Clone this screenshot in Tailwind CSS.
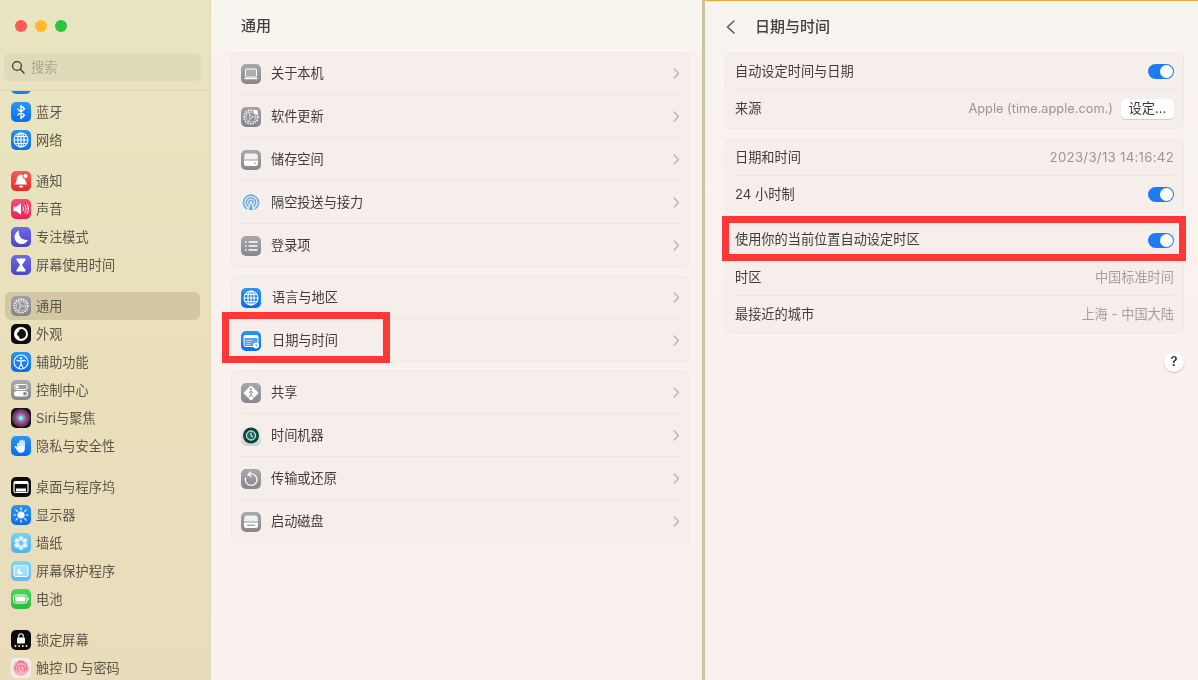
<!DOCTYPE html>
<html lang="zh-CN">
<head>
    <meta charset="UTF-8">
    <meta name="viewport" content="width=device-width, initial-scale=1.0">
    <title>日期与时间</title>
    <script src="https://cdn.jsdelivr.net/npm/@tailwindcss/browser@4"></script>
</head>
<body class="w-[1198px] h-[680px] overflow-hidden font-['Inter','Noto_Sans_CJK_SC',sans-serif] text-[13.2px] text-[#3f3d3a]">
    <svg class="hidden" width="0" height="0">
        <symbol id="globe" viewBox="0 0 20 20"><g fill="none" stroke="#fff" stroke-width="1.100"><circle cx="10" cy="10" r="7"/><ellipse cx="10" cy="10" rx="3.200" ry="7"/><path d="M10 3v14M3 10h14M4.200 6.500h11.600M4.200 13.500h11.600"/></g></symbol>
        <symbol id="gear" viewBox="0 0 20 20"><g fill="none" stroke="#fff"><circle cx="10" cy="10" r="6.800" stroke-width="1.800" stroke-dasharray="1.600 1" stroke-opacity=".9"/><circle cx="10" cy="10" r="4.800" stroke-width=".5"/><path d="M8.700 7.600L12 10l-3.300 2.400zM12 10h3M8.700 7.600L7 5M8.700 12.400L7 15" stroke-width=".6"/></g></symbol>
        <symbol id="chev" viewBox="0 0 7 11"><path d="M1.200 1l4.200 4.500-4.200 4.500" fill="none" stroke="#bdb7b4" stroke-width="1.500" stroke-linecap="round" stroke-linejoin="round"/></symbol>
    </svg>
    <div class="relative w-full h-full blur-[0.35px]">
    <div class="flex w-full h-full">
        <!-- sidebar -->
        <aside class="w-[211px] h-full shrink-0 flex flex-col bg-linear-to-b from-[#e9e5c1] via-[#e9e0bb] to-[#e9dcbb] text-[#5b574a] border-r border-[#e0d9b8]">
            <div class="h-[91px] shrink-0 border-b border-[#dcd6b3]">
                <div class="flex gap-2 pt-5 pl-[15px]">
                    <span class="w-3 h-3 rounded-full bg-[#fc5a55]"></span>
                    <span class="w-3 h-3 rounded-full bg-[#fdb92f]"></span>
                    <span class="w-3 h-3 rounded-full bg-[#2ac340]"></span>
                </div>
                <div class="flex items-center gap-[6px] h-[28px] mt-[21px] ml-1 w-[197px] rounded-md bg-[#dfdaba] pl-[7px]">
                    <svg class="w-[14px] h-[14px]" viewBox="0 0 14 14" fill="none" stroke="#3a3a36" stroke-width="1.300"><circle cx="6" cy="6" r="4.400"/><path d="M9.300 9.300L13 13" stroke-linecap="round"/></svg>
                    <span class="text-[#aaa690] pt-[2px]">搜索</span>
                </div>
            </div>
            <div class="flex-1 overflow-hidden">
                <div class="flex flex-col gap-[13px] mt-[-21px] pl-[5px] pr-[10px] [&_span+span]:pt-[2px]">
                    <div>
                        <div class="flex items-center gap-[5px] h-7 pl-[6px]"><span class="w-5 h-5 rounded-[5px] bg-[#1480f8]"></span></div>
                        <div class="flex items-center gap-[5px] h-7 pl-[6px]">
                            <span class="w-5 h-5 rounded-[5px] bg-linear-to-b from-[#2a94fb] to-[#0a6cf0]"><svg viewBox="0 0 20 20" fill="none" stroke="#fff" stroke-width="1.400" stroke-linejoin="round"><path d="M6.500 6.800l7 6.400-3.500 3.300V3.500l3.500 3.300-7 6.400"/></svg></span><span>蓝牙</span></div>
                        <div class="flex items-center gap-[5px] h-7 pl-[6px]">
                            <span class="w-5 h-5 rounded-[5px] bg-linear-to-b from-[#2a94fb] to-[#0a6cf0]"><svg viewBox="0 0 20 20"><use href="#globe"/></svg></span><span>网络</span></div>
                    </div>
                    <div>
                        <div class="flex items-center gap-[5px] h-7 pl-[6px]">
                            <span class="w-5 h-5 rounded-[5px] bg-linear-to-b from-[#fb5a52] to-[#e9262a]"><svg viewBox="0 0 20 20" fill="#fff"><path d="M10 3.500c-2.900 0-4.300 2.200-4.300 4.800 0 2.700-1 3.800-2.200 5.200h13c-1.200-1.400-2.200-2.500-2.200-5.200 0-2.600-1.400-4.800-4.300-4.800z"/><rect x="8" y="14.800" width="4" height="1.800" rx=".9"/><circle cx="14.500" cy="5" r="2.700" stroke="#f23c39"/></svg></span><span>通知</span></div>
                        <div class="flex items-center gap-[5px] h-7 pl-[6px]">
                            <span class="w-5 h-5 rounded-[5px] bg-linear-to-b from-[#fb4a78] to-[#e81f56]"><svg viewBox="0 0 20 20"><path d="M2.500 7.800h2.800L10 4.200v11.600l-4.700-3.600H2.500z" fill="#fff"/><path d="M12 8c.8 1.200.8 2.800 0 4M14 6.500c1.400 2.100 1.400 4.900 0 7M16 5c1.900 3 1.900 7 0 10" fill="none" stroke="#fff" stroke-width="1" stroke-linecap="round"/></svg></span><span>声音</span></div>
                        <div class="flex items-center gap-[5px] h-7 pl-[6px]">
                            <span class="w-5 h-5 rounded-[5px] bg-linear-to-b from-[#6f6ae8] to-[#4b44cc]"><svg viewBox="0 0 20 20"><path d="M8 3.500a7 7 0 1 0 9 9.200A7.500 7.500 0 0 1 8 3.500z" fill="#fff"/></svg></span><span>专注模式</span></div>
                        <div class="flex items-center gap-[5px] h-7 pl-[6px]">
                            <span class="w-5 h-5 rounded-[5px] bg-linear-to-b from-[#6f6ae8] to-[#4b44cc]"><svg viewBox="0 0 20 20"><path d="M5.500 3.500h9v1.500l-3.500 5 3.500 5v1.500h-9V15L9 10 5.500 5z" fill="#fff"/></svg></span><span>屏幕使用时间</span></div>
                    </div>
                    <div>
                        <div class="flex items-center gap-[5px] h-7 pl-[6px] rounded-md bg-[#d3c8a3]">
                            <span class="w-5 h-5 rounded-[5px] bg-linear-to-b from-[#a3a1a6] to-[#85838a]"><svg viewBox="0 0 20 20"><use href="#gear"/></svg></span><span>通用</span></div>
                        <div class="flex items-center gap-[5px] h-7 pl-[6px]">
                            <span class="w-5 h-5 rounded-[5px] bg-[#0c0c0c]"><svg viewBox="0 0 20 20"><circle cx="10" cy="10" r="7" fill="#fff"/><path d="M10 5a5 5 0 0 1 0 10c-1.500 0-2.600-2.200-2.600-5S8.500 5 10 5z" fill="#111"/><circle cx="8" cy="10" r="2" fill="#111"/></svg></span><span>外观</span></div>
                        <div class="flex items-center gap-[5px] h-7 pl-[6px]">
                            <span class="w-5 h-5 rounded-[5px] bg-linear-to-b from-[#2a94fb] to-[#0a6cf0]"><svg viewBox="0 0 20 20" fill="none" stroke="#fff"><circle cx="10" cy="10" r="7" stroke-width="1.100"/><circle cx="10" cy="6.300" r="1.200" fill="#fff" stroke="none"/><path d="M6 8.300l4 .8 4-.8M10 9v3M10 12l-2 3.500M10 12l2 3.500" stroke-width="1.200" stroke-linecap="round"/></svg></span><span>辅助功能</span></div>
                        <div class="flex items-center gap-[5px] h-7 pl-[6px]">
                            <span class="w-5 h-5 rounded-[5px] bg-linear-to-b from-[#a9a8ac] to-[#87868c]"><svg viewBox="0 0 20 20"><rect x="3.500" y="4.500" width="13" height="5" rx="2.500" fill="none" stroke="#fff"/><circle cx="6.300" cy="7" r="1.500" fill="#fff"/><rect x="3" y="11" width="14" height="5.500" rx="2.750" fill="#fff"/><circle cx="14" cy="13.750" r="1.800" fill="#87868c"/></svg></span><span>控制中心</span></div>
                        <div class="flex items-center gap-[5px] h-7 pl-[6px]">
                            <span class="w-5 h-5 rounded-[5px] bg-[#17131c] overflow-hidden"><svg viewBox="0 0 20 20"><defs><radialGradient id="siri"><stop offset="0" stop-color="#e8f2f5"/><stop offset=".35" stop-color="#5aa2c0"/><stop offset=".7" stop-color="#b8286f"/><stop offset="1" stop-color="#28504f"/></radialGradient></defs><circle cx="10" cy="10" r="9" fill="url(#siri)"/></svg></span><span>Siri与聚焦</span></div>
                        <div class="flex items-center gap-[5px] h-7 pl-[6px]">
                            <span class="w-5 h-5 rounded-[5px] bg-linear-to-b from-[#2a94fb] to-[#0a6cf0]"><svg viewBox="0 0 20 20"><path d="M6.200 7.500a.8.8 0 0 1 1.600 0V10h.4V5a.8.8 0 0 1 1.600 0v5h.4V4.300a.8.8 0 0 1 1.600 0V10h.4V5.300a.8.8 0 0 1 1.600 0v7.500c0 2.400-1.600 4-3.900 4-1.900 0-3-.9-3.900-2.600L3.700 11c-.4-.9.800-1.500 1.400-.7l1.100 1.500z" fill="#fff"/></svg></span><span>隐私与安全性</span></div>
                    </div>
                    <div>
                        <div class="flex items-center gap-[5px] h-7 pl-[6px]">
                            <span class="w-5 h-5 rounded-[5px] bg-[#0c0c0c]"><svg viewBox="0 0 20 20"><rect x="3" y="4.500" width="14" height="11" rx="1.500" fill="none" stroke="#fff" stroke-width="1.200"/><rect x="3" y="4.500" width="14" height="2.500" fill="#fff"/><rect x="5" y="11.500" width="10" height="3" fill="#fff"/></svg></span><span>桌面与程序坞</span></div>
                        <div class="flex items-center gap-[5px] h-7 pl-[6px]">
                            <span class="w-5 h-5 rounded-[5px] bg-linear-to-b from-[#2a94fb] to-[#0a6cf0]"><svg viewBox="0 0 20 20"><circle cx="10" cy="10" r="3.600" fill="#fff"/><path d="M10 2.800v2M10 15.200v2M2.800 10h2M15.200 10h2M4.900 4.900l1.400 1.400M13.700 13.700l1.400 1.400M4.900 15.100l1.400-1.400M13.700 6.300l1.400-1.400" stroke="#fff" stroke-width="1.200" stroke-linecap="round"/></svg></span><span>显示器</span></div>
                        <div class="flex items-center gap-[5px] h-7 pl-[6px]">
                            <span class="w-5 h-5 rounded-[5px] bg-linear-to-b from-[#72d4fa] to-[#4fb4ef]"><svg viewBox="0 0 20 20" fill="#fff" fill-opacity=".85" stroke="#5cc0f3" stroke-width=".5"><circle cx="10" cy="5.500" r="2.700"/><circle cx="10" cy="14.500" r="2.700"/><circle cx="6.100" cy="7.750" r="2.700"/><circle cx="13.900" cy="7.750" r="2.700"/><circle cx="6.100" cy="12.250" r="2.700"/><circle cx="13.900" cy="12.250" r="2.700"/></svg></span><span>墙纸</span></div>
                        <div class="flex items-center gap-[5px] h-7 pl-[6px]">
                            <span class="w-5 h-5 rounded-[5px] bg-linear-to-b from-[#7cd8f8] to-[#58bdf0]"><svg viewBox="0 0 20 20"><rect x="3" y="4.500" width="14" height="11" rx="1.500" fill="#d4f1fb" fill-opacity=".55" stroke="#fff"/><path d="M9 7.500a3 3 0 1 0 2.800 4 2.700 2.700 0 0 1-2.800-4z" fill="#fff"/></svg></span><span>屏幕保护程序</span></div>
                        <div class="flex items-center gap-[5px] h-7 pl-[6px]">
                            <span class="w-5 h-5 rounded-[5px] bg-linear-to-b from-[#48d85c] to-[#27bd3f]"><svg viewBox="0 0 20 20"><rect x="2.500" y="6" width="13.500" height="8" rx="2" fill="none" stroke="#fff"/><rect x="4" y="7.500" width="10.500" height="5" rx="1" fill="#fff"/><rect x="16.600" y="8.700" width="1.100" height="2.600" rx=".5" fill="#fff"/></svg></span><span>电池</span></div>
                    </div>
                    <div>
                        <div class="flex items-center gap-[5px] h-7 pl-[6px]">
                            <span class="w-5 h-5 rounded-[5px] bg-[#0c0c0c]"><svg viewBox="0 0 20 20"><rect x="6" y="7.500" width="8" height="6" rx="1" fill="#fff"/><path d="M7.700 7.500V6a2.300 2.300 0 0 1 4.600 0v1.500" fill="none" stroke="#fff" stroke-width="1.100"/><g fill="#fff"><circle cx="4.500" cy="16" r=".9"/><circle cx="8.200" cy="16" r=".9"/><circle cx="11.800" cy="16" r=".9"/><circle cx="15.500" cy="16" r=".9"/></g></svg></span><span>锁定屏幕</span></div>
                        <div class="flex items-center gap-[5px] h-7 pl-[6px]">
                            <span class="w-5 h-5 rounded-[5px] bg-[#f1ede6]"><svg viewBox="0 0 20 20" fill="#f6b3bf" stroke="#ea7088" stroke-width="1.100" stroke-linecap="round"><circle cx="10" cy="10" r="8" stroke="none"/><path fill="none" d="M10 8.800v3.400M7.300 13a4 4 0 0 1-.6-3 3.400 3.400 0 0 1 6.700 0c.2 1.200 0 2.400-.4 3.500M4.500 12a6 6 0 0 1 .4-4.500 5.600 5.600 0 0 1 10.200 0c.7 1.500.7 3.200.3 5M7.500 3.800a7 7 0 0 1 5 0"/></svg></span><span>触控&#8201;ID&#8201;与密码</span></div>
                    </div>
                </div>
            </div>
        </aside>

        <!-- general pane -->
        <main class="w-[491px] h-full shrink-0 bg-[#faf1ee] flex flex-col">
            <div class="h-[52px] shrink-0 bg-[#f8f4ee] pl-[30px] pt-[15px] text-[15px] font-medium leading-[22px] text-[#44413d]">通用</div>
            <div class="flex flex-col gap-[9px] w-[459px] ml-5">
                <div class="rounded-md bg-[#f5eeeb] shadow-[inset_0_0_0_1px_#efe8e4] px-[10px]">
                    <div class="flex items-center h-[43px] shadow-[inset_0_-1px_0_#ebe4e0]">
                        <span class="w-5 h-5 rounded-[5px] bg-linear-to-b from-[#a9a8ac] to-[#87868c]"><svg viewBox="0 0 20 20"><rect x="4.500" y="5" width="11" height="8" rx=".8" fill="#fff" fill-opacity=".2" stroke="#fff"/><path d="M3 13.800h14l-.8 1.400H3.800z" fill="#fff"/></svg></span>
                        <span class="ml-[10px] flex-1">关于本机</span>
                        <svg class="w-[7px] h-[11px]"><use href="#chev"/></svg>
                    </div>
                    <div class="flex items-center h-[43px] shadow-[inset_0_-1px_0_#ebe4e0]">
                        <span class="w-5 h-5 rounded-[5px] bg-linear-to-b from-[#a3a1a6] to-[#85838a]"><svg viewBox="0 0 20 20"><use href="#gear"/><circle cx="14.800" cy="5" r="2.200" fill="#fff"/></svg></span>
                        <span class="ml-[10px] flex-1">软件更新</span>
                        <svg class="w-[7px] h-[11px]"><use href="#chev"/></svg>
                    </div>
                    <div class="flex items-center h-[43px] shadow-[inset_0_-1px_0_#ebe4e0]">
                        <span class="w-5 h-5 rounded-[5px] bg-linear-to-b from-[#a9a8ac] to-[#87868c]"><svg viewBox="0 0 20 20"><path d="M5.500 3.500h9a2 2 0 0 1 2 1.700l.5 4.300H3l.5-4.300a2 2 0 0 1 2-1.700z" fill="#fff" fill-opacity=".85"/><path d="M3 10.500h14v3.500a2 2 0 0 1-2 2H5a2 2 0 0 1-2-2z" fill="#fff"/><circle cx="14" cy="13.200" r=".8" fill="#87868c"/></svg></span>
                        <span class="ml-[10px] flex-1">储存空间</span>
                        <svg class="w-[7px] h-[11px]"><use href="#chev"/></svg>
                    </div>
                    <div class="flex items-center h-[43px] shadow-[inset_0_-1px_0_#ebe4e0]">
                        <span class="w-5 h-5 rounded-[5px] bg-[#f0f1f1]"><svg viewBox="0 0 20 20" fill="none" stroke="#6fa8ea" stroke-width="1.600"><path d="M6 16a7.500 7.500 0 1 1 8 0M7.500 13.500a4.700 4.700 0 1 1 5 0"/><path d="M8.800 11a2.100 2.100 0 1 1 2.400 0"/><path d="M10 10l-2.300 7h4.600z" fill="#6fa8ea" stroke="none"/></svg></span>
                        <span class="ml-[10px] flex-1">隔空投送与接力</span>
                        <svg class="w-[7px] h-[11px]"><use href="#chev"/></svg>
                    </div>
                    <div class="flex items-center h-[43px]">
                        <span class="w-5 h-5 rounded-[5px] bg-linear-to-b from-[#a9a8ac] to-[#87868c]"><svg viewBox="0 0 20 20" stroke="#fff" stroke-width="1.300" stroke-linecap="round"><path d="M8 6h8M8 10h8M8 14h8M4.500 6h.5M4.500 10h.5M4.500 14h.5"/></svg></span>
                        <span class="ml-[10px] flex-1">登录项</span>
                        <svg class="w-[7px] h-[11px]"><use href="#chev"/></svg>
                    </div>
                </div>
                <div class="rounded-md bg-[#f5eeeb] shadow-[inset_0_0_0_1px_#efe8e4] px-[10px]">
                    <div class="flex items-center h-[43px] shadow-[inset_0_-1px_0_#ebe4e0]">
                        <span class="w-5 h-5 rounded-[5px] bg-linear-to-b from-[#2a94fb] to-[#0a6cf0]"><svg viewBox="0 0 20 20"><use href="#globe"/></svg></span>
                        <span class="ml-[11px] flex-1">语言与地区</span>
                        <svg class="w-[7px] h-[11px]"><use href="#chev"/></svg>
                    </div>
                    <div class="flex items-center h-[43px]">
                        <span class="w-5 h-5 rounded-[5px] bg-linear-to-b from-[#2a94fb] to-[#0a6cf0]"><svg viewBox="0 0 20 20"><rect x="3" y="4.500" width="14" height="11" rx="1.500" fill="#fff" fill-opacity=".25" stroke="#fff"/><rect x="3" y="4.500" width="14" height="2.500" fill="#fff"/><path d="M5.500 9.500h6M5.500 11.500h5M5.500 13.500h4" stroke="#fff" stroke-dasharray="1 .8"/><circle cx="15" cy="14.500" r="3" fill="#fff"/><path d="M15 13v1.500l1 .6" stroke="#1a7df5" stroke-width=".8" fill="none"/></svg></span>
                        <span class="ml-[11px] flex-1">日期与时间</span>
                        <svg class="w-[7px] h-[11px]"><use href="#chev"/></svg>
                    </div>
                </div>
                <div class="rounded-md bg-[#f5eeeb] shadow-[inset_0_0_0_1px_#efe8e4] px-[10px]">
                    <div class="flex items-center h-[43px] shadow-[inset_0_-1px_0_#ebe4e0]">
                        <span class="w-5 h-5 rounded-[5px] bg-linear-to-b from-[#a9a8ac] to-[#87868c]"><svg viewBox="0 0 20 20"><rect x="4.500" y="4.500" width="11" height="11" rx="1.500" fill="#fff" transform="rotate(45 10 10)"/><circle cx="10" cy="6.300" r="1" fill="#87868c"/><path d="M10 8v3.500M7.800 9.500l2.200-1 2.200 1M10 11.500l-2 3M10 11.500l2 3" stroke="#87868c" stroke-width=".9" fill="none"/></svg></span>
                        <span class="ml-[10px] flex-1">共享</span>
                        <svg class="w-[7px] h-[11px]"><use href="#chev"/></svg>
                    </div>
                    <div class="flex items-center h-[43px] shadow-[inset_0_-1px_0_#ebe4e0]">
                        <span class="w-5 h-5 rounded-[5px] bg-linear-to-b from-[#f2f2f0] to-[#cfd3d0]"><svg viewBox="0 0 20 20"><circle cx="10" cy="9.500" r="8" fill="#0f3f3c"/><circle cx="10" cy="9.500" r="5.800" fill="#1c6d60"/><circle cx="10" cy="9.500" r="4.500" fill="none" stroke="#fff"/><path d="M10 6.800v2.900l2 1.200" fill="none" stroke="#fff"/></svg></span>
                        <span class="ml-[10px] flex-1">时间机器</span>
                        <svg class="w-[7px] h-[11px]"><use href="#chev"/></svg>
                    </div>
                    <div class="flex items-center h-[43px] shadow-[inset_0_-1px_0_#ebe4e0]">
                        <span class="w-5 h-5 rounded-[5px] bg-linear-to-b from-[#a9a8ac] to-[#87868c]"><svg viewBox="0 0 20 20" fill="none" stroke="#fff" stroke-width="1.200" stroke-linecap="round"><path d="M7 5.800a5.800 5.800 0 1 1-2.300 3"/><path d="M9.500 3L7 5.800l3 1.800"/></svg></span>
                        <span class="ml-[10px] flex-1">传输或还原</span>
                        <svg class="w-[7px] h-[11px]"><use href="#chev"/></svg>
                    </div>
                    <div class="flex items-center h-[43px]">
                        <span class="w-5 h-5 rounded-[5px] bg-linear-to-b from-[#a9a8ac] to-[#87868c]"><svg viewBox="0 0 20 20"><path d="M5.500 3.500h9a2 2 0 0 1 2 1.700l.5 4.300H3l.5-4.300a2 2 0 0 1 2-1.700z" fill="#fff" fill-opacity=".85"/><path d="M3 10.500h14v3.500a2 2 0 0 1-2 2H5a2 2 0 0 1-2-2z" fill="#fff"/><rect x="6" y="12.700" width="8" height="1" fill="#87868c"/></svg></span>
                        <span class="ml-[10px] flex-1">启动磁盘</span>
                        <svg class="w-[7px] h-[11px]"><use href="#chev"/></svg>
                    </div>
                </div>
            </div>
        </main>

        <div class="w-[3px] h-full shrink-0 bg-[#cac4a0]"></div>

        <!-- date and time pane -->
        <section class="flex-1 h-full bg-linear-to-b from-[#f7f3ee] from-[10%] to-[#faf1ee] to-[45%] border-t border-[#e8ab3a] pl-5 pr-[14px]">
            <div class="flex items-center h-[52px]">
                <svg class="w-[9px] h-[14px] ml-[1px]" viewBox="0 0 9 14" fill="none" stroke="#5a5855" stroke-width="1.500" stroke-linecap="round" stroke-linejoin="round"><path d="M8 1L1.500 7 8 13"/></svg>
                <span class="ml-5 text-[15px] font-medium text-[#44413d]">日期与时间</span>
            </div>
            <div class="flex flex-col gap-[10px]">
                <div class="rounded-md bg-[#f5eeeb] shadow-[inset_0_0_0_1px_#efe8e4] px-[10px] pb-[2px]">
                    <div class="flex items-center justify-between h-[37px] shadow-[inset_0_-1px_0_#ebe4e0]">
                        <span>自动设定时间与日期</span>
                        <span class="flex justify-end items-center w-[26px] h-[15px] rounded-full bg-[#1f7bf2] pr-[1px]"><span class="w-[13px] h-[13px] rounded-full bg-white"></span></span>
                    </div>
                    <div class="flex items-center justify-between h-[37px]">
                        <span>来源</span>
                        <div class="flex items-center gap-2">
                            <span class="text-[12.800px] text-[#9b9693]">Apple (time.apple.com.)</span>
                            <span class="flex items-center justify-center w-[53px] h-5 rounded-[5px] bg-white shadow-[0_1px_1px_rgba(0,0,0,0.15)] text-[#3a3836]">设定...</span>
                        </div>
                    </div>
                </div>
                <div class="rounded-md bg-[#f5eeeb] shadow-[inset_0_0_0_1px_#efe8e4] px-[10px]">
                    <div class="flex items-center justify-between h-[37px] shadow-[inset_0_-1px_0_#ebe4e0]">
                        <span>日期和时间</span>
                        <span class="text-[#9b9693] tracking-[0.3px]">2023/3/13 14:16:42</span>
                    </div>
                    <div class="flex items-center justify-between h-[37px]">
                        <span>24 小时制</span>
                        <span class="flex justify-end items-center w-[26px] h-[15px] rounded-full bg-[#1f7bf2] pr-[1px]"><span class="w-[13px] h-[13px] rounded-full bg-white"></span></span>
                    </div>
                </div>
                <div class="mt-[-2px] rounded-md bg-[#f5eeeb] shadow-[inset_0_0_0_1px_#efe8e4] px-[10px]">
                    <div class="flex items-center justify-between h-[38px] shadow-[inset_0_-1px_0_#ebe4e0]">
                        <span>使用你的当前位置自动设定时区</span>
                        <span class="flex justify-end items-center w-[26px] h-[15px] rounded-full bg-[#1f7bf2] pr-[1px]"><span class="w-[13px] h-[13px] rounded-full bg-white"></span></span>
                    </div>
                    <div class="flex items-center justify-between h-[37px] shadow-[inset_0_-1px_0_#ebe4e0]">
                        <span>时区</span>
                        <span class="text-[#a5a09d]">中国标准时间</span>
                    </div>
                    <div class="flex items-center justify-between h-[37px]">
                        <span>最接近的城市</span>
                        <span class="text-[#a5a09d]">上海 - 中国大陆</span>
                    </div>
                </div>
            </div>
            <div class="flex justify-end mt-[19px]">
                <span class="flex items-center justify-center w-5 h-5 rounded-full bg-white shadow-[0_1px_2px_rgba(0,0,0,0.2)] text-[13px] font-semibold text-[#333]">?</span>
            </div>
        </section>
    </div>

    <!-- red annotations drawn over the screenshot -->
    <div class="absolute left-[222px] top-[312px] w-[168px] h-[51px] border-[7px] border-[#fe3838]"></div>
    <div class="absolute left-[722px] top-[216px] w-[464px] h-[45px] border-[7px] border-[#fe3838]"></div>
    </div>
</body>
</html>
